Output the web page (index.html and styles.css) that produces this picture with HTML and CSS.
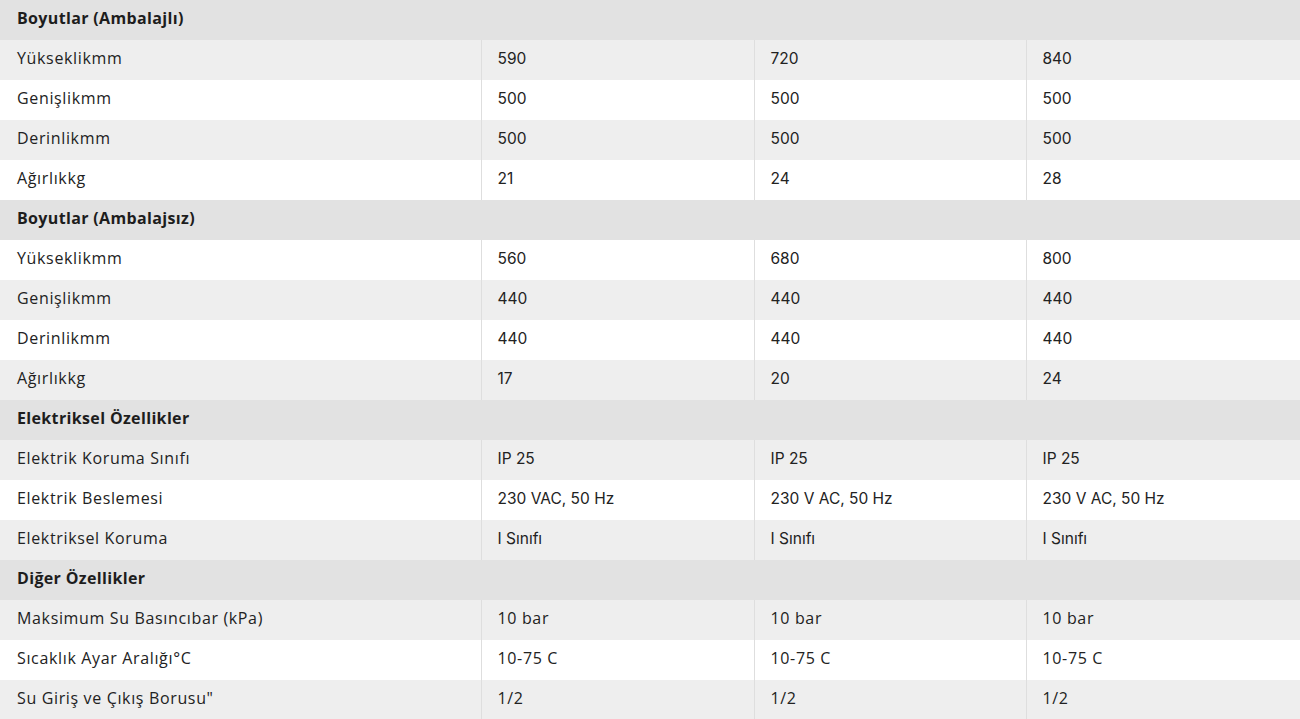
FILE: index.html
```html
<!DOCTYPE html>
<html lang="tr">
<head>
<meta charset="utf-8">
<title>Teknik Özellikler</title>
<link rel="stylesheet" href="styles.css">
</head>
<body>
<table class="spec">
  <colgroup>
    <col class="c-label"><col class="c-v1"><col class="c-v2"><col class="c-v3">
  </colgroup>
  <tbody>
    <tr class="sec"><th colspan="4">Boyutlar (Ambalajlı)</th></tr>
    <tr class="odd"><td class="lbl">Yükseklikmm</td><td>590</td><td>720</td><td>840</td></tr>
    <tr class="even"><td class="lbl">Genişlikmm</td><td>500</td><td>500</td><td>500</td></tr>
    <tr class="odd"><td class="lbl">Derinlikmm</td><td>500</td><td>500</td><td>500</td></tr>
    <tr class="even"><td class="lbl">Ağırlıkkg</td><td>21</td><td>24</td><td>28</td></tr>
    <tr class="sec"><th colspan="4">Boyutlar (Ambalajsız)</th></tr>
    <tr class="even"><td class="lbl">Yükseklikmm</td><td>560</td><td>680</td><td>800</td></tr>
    <tr class="odd"><td class="lbl">Genişlikmm</td><td>440</td><td>440</td><td>440</td></tr>
    <tr class="even"><td class="lbl">Derinlikmm</td><td>440</td><td>440</td><td>440</td></tr>
    <tr class="odd"><td class="lbl">Ağırlıkkg</td><td>17</td><td>20</td><td>24</td></tr>
    <tr class="sec"><th colspan="4">Elektriksel Özellikler</th></tr>
    <tr class="odd"><td class="lbl">Elektrik Koruma Sınıfı</td><td>IP 25</td><td>IP 25</td><td>IP 25</td></tr>
    <tr class="even"><td class="lbl">Elektrik Beslemesi</td><td>230 VAC, 50 Hz</td><td>230 V AC, 50 Hz</td><td>230 V AC, 50 Hz</td></tr>
    <tr class="odd"><td class="lbl">Elektriksel Koruma</td><td>I Sınıfı</td><td>I Sınıfı</td><td>I Sınıfı</td></tr>
    <tr class="sec"><th colspan="4">Diğer Özellikler</th></tr>
    <tr class="odd alt"><td class="lbl">Maksimum Su Basıncıbar (kPa)</td><td>10 bar</td><td>10 bar</td><td>10 bar</td></tr>
    <tr class="even alt"><td class="lbl">Sıcaklık Ayar Aralığı°C</td><td>10-75 C</td><td>10-75 C</td><td>10-75 C</td></tr>
    <tr class="odd alt"><td class="lbl">Su Giriş ve Çıkış Borusu"</td><td>1/2</td><td>1/2</td><td>1/2</td></tr>
  </tbody>
</table>
</body>
</html>
```
FILE: styles.css
```css
html, body {
  margin: 0;
  padding: 0;
  background: #ffffff;
}
body {
  font-family: "Open Sans", "Noto Sans", sans-serif;
  color: #222222;
}
.spec {
  width: 1300px;
  border-collapse: collapse;
  table-layout: fixed;
}
.c-label { width: 481px; }
.c-v1 { width: 273px; }
.c-v2 { width: 272px; }
.c-v3 { width: 274px; }
.spec th,
.spec td {
  height: 40px;
  padding: 0 0 2px 16px;
  box-sizing: border-box;
  text-align: left;
  vertical-align: middle;
  white-space: nowrap;
  line-height: 20px;
}
.spec th {
  background: #e2e2e2;
  padding: 0 0 4px 17px;
  font-family: "Open Sans", "Noto Sans", sans-serif;
  font-size: 16px;
  font-weight: 700;
  letter-spacing: 0.35px;
  color: #1d1d1d;
}
.spec td {
  font-family: "Inter", "Liberation Sans", sans-serif;
  font-size: 15.5px;
  border-left: 1px solid #dedede;
}
.spec td.lbl {
  padding: 0 0 4px 17px;
  font-family: "Open Sans", "Noto Sans", sans-serif;
  font-size: 16px;
  border-left: none;
  letter-spacing: 0.65px;
}
.spec tr.alt td {
  font-family: "Open Sans", "Noto Sans", sans-serif;
  font-size: 16px;
  letter-spacing: 0.65px;
  padding-bottom: 4px;
}
.odd td { background: #eeeeee; }
.even td { background: #ffffff; }
```
